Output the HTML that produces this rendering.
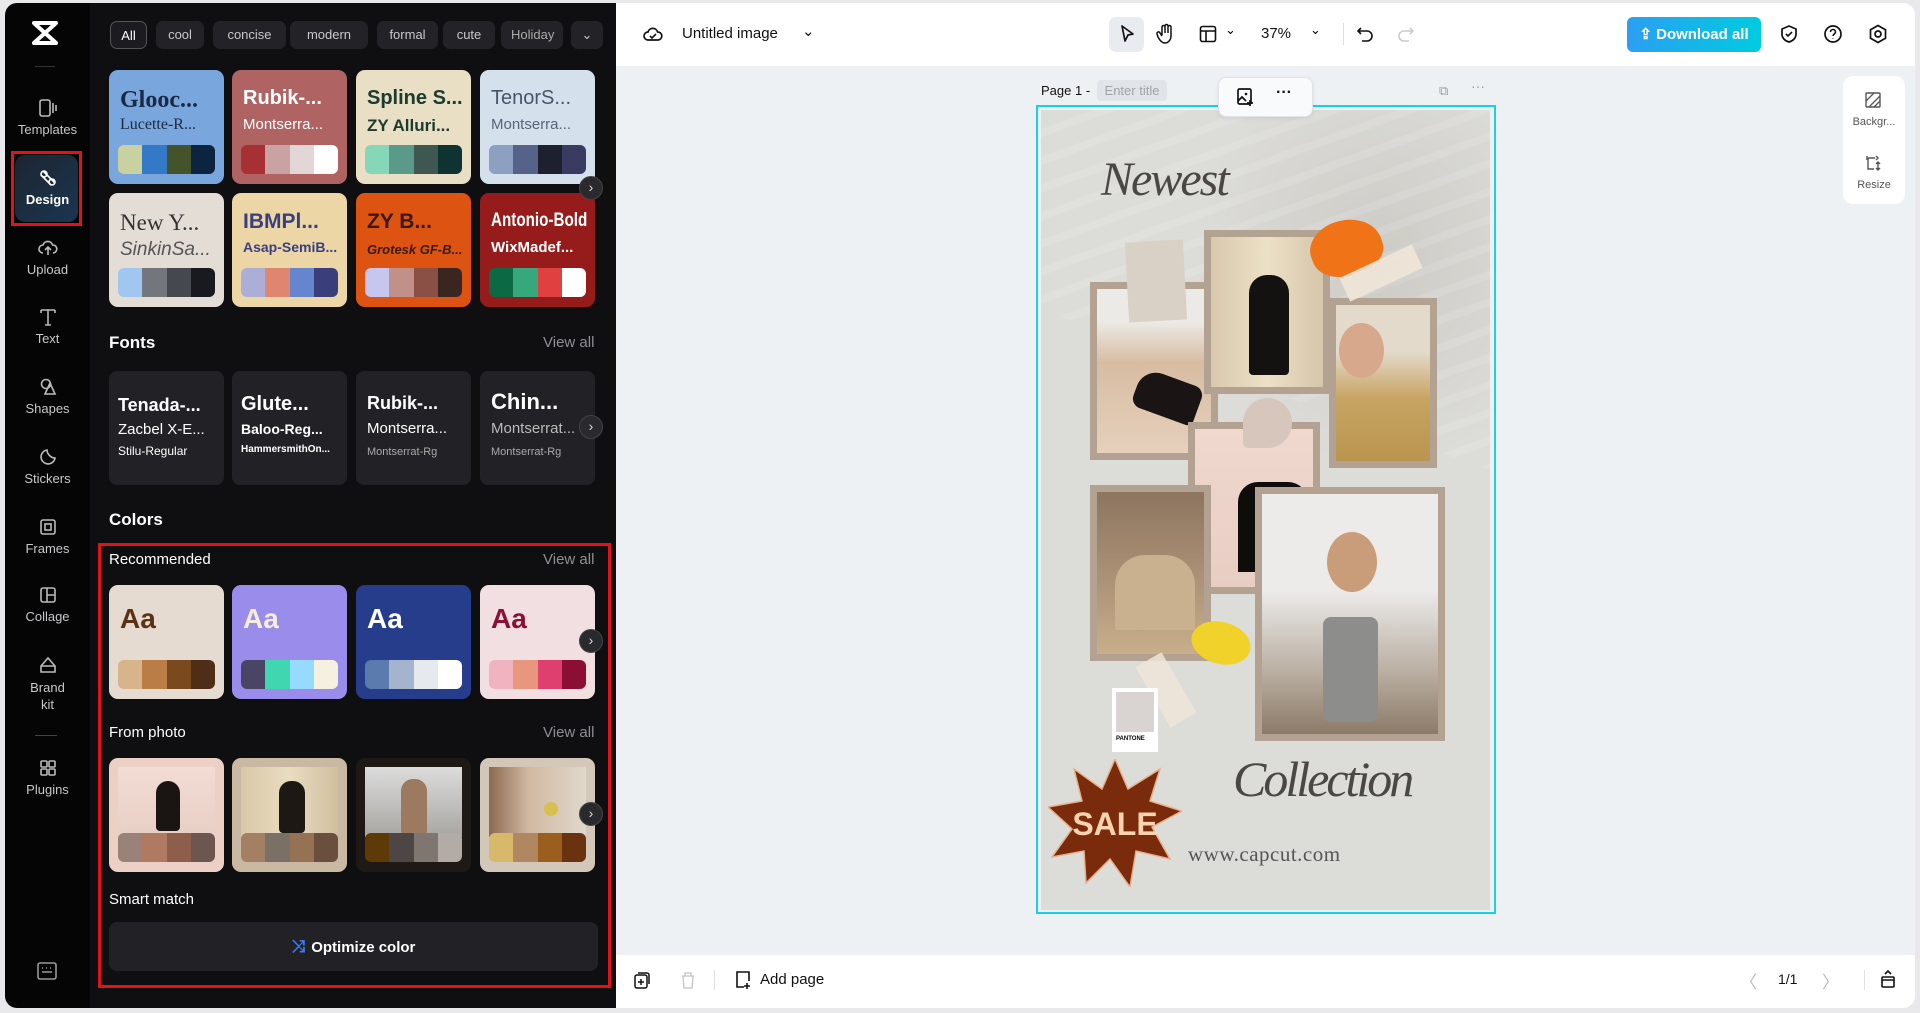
<!DOCTYPE html>
<html><head><meta charset="utf-8">
<style>
*{box-sizing:border-box;margin:0;padding:0}
body{width:1920px;height:1013px;background:#e9e9eb;font-family:"Liberation Sans",sans-serif;position:relative;overflow:hidden}
.a{position:absolute}
#side{left:5px;top:3px;width:85px;height:1005px;background:#050505;border-radius:12px 0 0 12px}
#panel{left:90px;top:3px;width:526px;height:1005px;background:#0f0f11}
.sl{position:absolute;left:5px;width:85px;text-align:center;color:#c8c8cc;font-size:13px}
.sl svg{display:block;margin:0 auto 4px}
.chip{position:absolute;top:21px;height:28px;border-radius:7px;background:#232327;color:#c9c9cc;font-size:13px;line-height:28px;text-align:center}
.card{position:absolute;width:115px;height:114px;border-radius:9px;overflow:hidden}
.card .t1{position:absolute;left:11px;top:17px;font-size:22px;white-space:nowrap}
.card .t2{position:absolute;left:11px;top:46px;font-size:16px;white-space:nowrap}
.sw{position:absolute;left:9px;right:9px;bottom:10px;height:29px;border-radius:6px;overflow:hidden;display:flex}
.sw i{flex:1}
.fc{position:absolute;width:115px;height:114px;border-radius:8px;background:#222226;color:#fff}
.h{position:absolute;color:#fff;font-weight:bold;font-size:17px}
.va{position:absolute;right:24px;color:#8f8f95;font-size:15px}
.arr{position:absolute;width:24px;height:24px;border-radius:50%;background:#2a2a2e;border:1px solid #444;color:#ddd;font-size:14px;line-height:21px;text-align:center}
.fr{position:absolute;background:#b3a292;padding:7px}
.fr div{width:100%;height:100%}
</style></head><body>
<div id="side" class="a"></div>
<div id="panel" class="a"></div>
<!-- logo -->
<svg class="a" style="left:31px;top:20px" width="28" height="26" viewBox="0 0 28 26"><path d="M3 3h22M3 23h22M4 4l20 18M24 4L4 22" stroke="#fff" stroke-width="4" fill="none" stroke-linecap="round"/></svg>
<div class="a" style="left:35px;top:66px;width:20px;height:1px;background:#333"></div>
<div class="sl" style="top:98px"><svg width="20" height="20" viewBox="0 0 20 20"><rect x="2" y="2" width="10" height="16" rx="2" fill="none" stroke="#bbb" stroke-width="1.6"/><path d="M15 5v10M18 7v6" stroke="#bbb" stroke-width="1.6"/></svg>Templates</div>
<div class="a" style="left:11px;top:151px;width:71px;height:75px;border:3px solid #e0121b;"></div>
<div class="a" style="left:15px;top:155px;width:63px;height:67px;border-radius:10px;background:linear-gradient(135deg,#1c2530,#1b3650)"></div>
<div class="sl" style="top:168px;color:#fff;font-weight:bold"><svg width="20" height="20" viewBox="0 0 20 20"><path d="M5 3l12 12M3 7l10 10" stroke="#fff" stroke-width="1.6" fill="none"/><circle cx="6" cy="6" r="3" fill="none" stroke="#fff" stroke-width="1.6"/><circle cx="14" cy="14" r="3" fill="none" stroke="#fff" stroke-width="1.6"/></svg>Design</div>
<div class="sl" style="top:238px"><svg width="20" height="20" viewBox="0 0 20 20"><path d="M5 15a4 4 0 010-8 5 5 0 019.6 0 4 4 0 01.4 8M10 17v-7M7 12l3-3 3 3" stroke="#bbb" stroke-width="1.6" fill="none"/></svg>Upload</div>
<div class="sl" style="top:307px"><svg width="20" height="20" viewBox="0 0 20 20"><path d="M3 3h14M10 3v15M3 3v3M17 3v3M7 18h6" stroke="#bbb" stroke-width="1.6" fill="none"/></svg>Text</div>
<div class="sl" style="top:377px"><svg width="20" height="20" viewBox="0 0 20 20"><circle cx="8" cy="7" r="4.5" fill="none" stroke="#bbb" stroke-width="1.6"/><path d="M12 6l5 11H7z" fill="none" stroke="#bbb" stroke-width="1.6"/></svg>Shapes</div>
<div class="sl" style="top:447px"><svg width="20" height="20" viewBox="0 0 20 20"><path d="M17 11A7 7 0 119 3c0 4 4 8 8 8z" fill="none" stroke="#bbb" stroke-width="1.6"/></svg>Stickers</div>
<div class="sl" style="top:517px"><svg width="20" height="20" viewBox="0 0 20 20"><rect x="3" y="3" width="14" height="14" rx="2" fill="none" stroke="#bbb" stroke-width="1.6"/><rect x="7" y="7" width="6" height="6" fill="none" stroke="#bbb" stroke-width="1.6"/></svg>Frames</div>
<div class="sl" style="top:585px"><svg width="20" height="20" viewBox="0 0 20 20"><rect x="3" y="3" width="14" height="14" rx="2" fill="none" stroke="#bbb" stroke-width="1.6"/><path d="M9 3v14M9 10h8" stroke="#bbb" stroke-width="1.6"/></svg>Collage</div>
<div class="sl" style="top:655px;line-height:17px"><svg width="20" height="20" viewBox="0 0 20 20"><path d="M3 11l7-8 7 8v6H3z M3 11h14" fill="none" stroke="#bbb" stroke-width="1.6"/></svg>Brand<br>kit</div>
<div class="a" style="left:35px;top:735px;width:22px;height:1px;background:#444"></div>
<div class="sl" style="top:758px"><svg width="20" height="20" viewBox="0 0 20 20"><rect x="3" y="3" width="6" height="6" rx="1" fill="none" stroke="#bbb" stroke-width="1.6"/><rect x="11" y="3" width="6" height="6" rx="1" fill="none" stroke="#bbb" stroke-width="1.6"/><rect x="3" y="11" width="6" height="6" rx="1" fill="none" stroke="#bbb" stroke-width="1.6"/><rect x="11" y="11" width="6" height="6" rx="1" fill="none" stroke="#bbb" stroke-width="1.6"/></svg>Plugins</div>
<svg class="a" style="left:37px;top:962px" width="20" height="18" viewBox="0 0 20 18"><rect x="1" y="1" width="18" height="16" rx="2" fill="none" stroke="#999" stroke-width="1.6"/><path d="M5 6h1M9 6h1M13 6h1M5 10h10" stroke="#999" stroke-width="1.6"/></svg>

<!-- chips -->
<div class="chip" style="left:110px;width:37px;border:1px solid #555;color:#fff;background:#1c1c20">All</div>
<div class="chip" style="left:156px;width:48px">cool</div>
<div class="chip" style="left:213px;width:73px">concise</div>
<div class="chip" style="left:290px;width:78px">modern</div>
<div class="chip" style="left:377px;width:61px">formal</div>
<div class="chip" style="left:443px;width:52px">cute</div>
<div class="chip" style="left:501px;width:62px;text-align:left;padding-left:10px;overflow:hidden;color:#aaa">Holiday</div>
<div class="chip" style="left:571px;width:32px">⌄</div>

<!-- theme cards -->
<div class="card" style="left:109px;top:70px;background:#79a6dc"><div class="t1" style="color:#1b2a44;font-family:'Liberation Serif',serif;font-weight:bold;font-size:24px">Glooc...</div><div class="t2" style="color:#1b2a44;font-family:'Liberation Serif',serif">Lucette-R...</div><div class="sw"><i style="background:#c9d1a0"></i><i style="background:#3478c8"></i><i style="background:#45532a"></i><i style="background:#0c2440"></i></div></div>
<div class="card" style="left:232px;top:70px;background:#af6363"><div class="t1" style="color:#fff;font-weight:bold;font-size:20px">Rubik-...</div><div class="t2" style="color:#fff;font-size:15px">Montserra...</div><div class="sw"><i style="background:#a63034"></i><i style="background:#c9a3a3"></i><i style="background:#e2d6d6"></i><i style="background:#fff"></i></div></div>
<div class="card" style="left:356px;top:70px;background:#e8dfc4"><div class="t1" style="color:#1c3a2f;font-weight:bold;font-size:20px">Spline S...</div><div class="t2" style="color:#1c3a2f;font-weight:bold;font-size:17px">ZY Alluri...</div><div class="sw"><i style="background:#86d6b8"></i><i style="background:#5a9a88"></i><i style="background:#3f5751"></i><i style="background:#0f3330"></i></div></div>
<div class="card" style="left:480px;top:70px;background:#d4e0ec"><div class="t1" style="color:#4a5468;font-size:20px">TenorS...</div><div class="t2" style="color:#5a6478;font-size:15px">Montserra...</div><div class="sw"><i style="background:#8ea0c2"></i><i style="background:#56628a"></i><i style="background:#1e2030"></i><i style="background:#393b60"></i></div></div>
<div class="card" style="left:109px;top:193px;background:#e3ddd6"><div class="t1" style="color:#333;font-family:'Liberation Serif',serif;font-size:23px">New Y...</div><div class="t2" style="color:#555;font-style:italic;font-size:19px">SinkinSa...</div><div class="sw"><i style="background:#a1c6ef"></i><i style="background:#73777d"></i><i style="background:#45484f"></i><i style="background:#181a1f"></i></div></div>
<div class="card" style="left:232px;top:193px;background:#ecd6a6"><div class="t1" style="color:#3a3f80;font-weight:bold;font-size:21px">IBMPl...</div><div class="t2" style="color:#3a3f80;font-weight:bold;font-size:14px">Asap-SemiB...</div><div class="sw"><i style="background:#abafd8"></i><i style="background:#e08570"></i><i style="background:#6585cf"></i><i style="background:#3a3f7b"></i></div></div>
<div class="card" style="left:356px;top:193px;background:#dc5312"><div class="t1" style="color:#3a1a10;font-weight:bold;font-size:21px">ZY B...</div><div class="t2" style="color:#3a1a10;font-weight:bold;font-style:italic;font-size:13px;top:49px">Grotesk GF-B...</div><div class="sw"><i style="background:#c6c6ee"></i><i style="background:#c19088"></i><i style="background:#8a5045"></i><i style="background:#3a2620"></i></div></div>
<div class="card" style="left:480px;top:193px;background:#961c1c"><div class="t1" style="color:#fff;font-weight:bold;font-size:19px;transform:scaleX(.8);transform-origin:left">Antonio-Bold</div><div class="t2" style="color:#fff;font-weight:bold;font-size:15px">WixMadef...</div><div class="sw"><i style="background:#0b6a44"></i><i style="background:#36a87c"></i><i style="background:#e04040"></i><i style="background:#fff"></i></div></div>
<div class="arr" style="left:579px;top:176px">›</div>

<div class="h" style="left:109px;top:333px">Fonts</div><div class="va" style="top:334px;right:1324px;left:auto"></div>
<div class="a" style="left:543px;top:334px;color:#8f8f95;font-size:15px">View all</div>
<div class="fc" style="left:109px;top:371px"><div class="a" style="left:9px;top:24px;font-weight:bold;font-size:18px">Tenada-...</div><div class="a" style="left:9px;top:50px;font-size:15px">Zacbel X-E...</div><div class="a" style="left:9px;top:73px;font-size:12px">Stilu-Regular</div></div>
<div class="fc" style="left:232px;top:371px"><div class="a" style="left:9px;top:22px;font-weight:bold;font-size:20px">Glute...</div><div class="a" style="left:9px;top:50px;font-weight:bold;font-size:14px">Baloo-Reg...</div><div class="a" style="left:9px;top:73px;font-weight:bold;font-size:10px">HammersmithOn...</div></div>
<div class="fc" style="left:356px;top:371px"><div class="a" style="left:11px;top:22px;font-weight:bold;font-size:18px">Rubik-...</div><div class="a" style="left:11px;top:49px;font-size:15px">Montserra...</div><div class="a" style="left:11px;top:75px;font-size:11px;color:#aaa">Montserrat-Rg</div></div>
<div class="fc" style="left:480px;top:371px"><div class="a" style="left:11px;top:18px;font-weight:bold;font-size:22px">Chin...</div><div class="a" style="left:11px;top:49px;font-size:15px;color:#bbb">Montserrat...</div><div class="a" style="left:11px;top:75px;font-size:11px;color:#aaa">Montserrat-Rg</div></div>
<div class="arr" style="left:579px;top:415px">›</div>

<div class="h" style="left:109px;top:510px">Colors</div>
<div class="a" style="left:98px;top:543px;width:513px;height:445px;border:3px solid #e0121b"></div>
<div class="a" style="left:109px;top:551px;color:#fff;font-size:15px">Recommended</div>
<div class="a" style="left:543px;top:551px;color:#8f8f95;font-size:15px">View all</div>
<div class="card" style="left:109px;top:585px;background:#e6dbd0"><div class="t1" style="color:#5a3315;font-weight:bold;font-size:28px;top:18px">Aa</div><div class="sw"><i style="background:#d7b48a"></i><i style="background:#b97d45"></i><i style="background:#7a4a1e"></i><i style="background:#4f2e18"></i></div></div>
<div class="card" style="left:232px;top:585px;background:#9a8ceb"><div class="t1" style="color:#f5eede;font-weight:bold;font-size:28px;top:18px">Aa</div><div class="sw"><i style="background:#4b4565"></i><i style="background:#3fd6b0"></i><i style="background:#96daff"></i><i style="background:#f5f0e0"></i></div></div>
<div class="card" style="left:356px;top:585px;background:#253d8a"><div class="t1" style="color:#fff;font-weight:bold;font-size:28px;top:18px">Aa</div><div class="sw"><i style="background:#5b7aad"></i><i style="background:#a4b4cc"></i><i style="background:#e6eaee"></i><i style="background:#fff"></i></div></div>
<div class="card" style="left:480px;top:585px;background:#f1dfe1"><div class="t1" style="color:#8a1038;font-weight:bold;font-size:28px;top:18px">Aa</div><div class="sw"><i style="background:#f2b3c0"></i><i style="background:#e8967e"></i><i style="background:#de3f6e"></i><i style="background:#8b0f35"></i></div></div>
<div class="arr" style="left:579px;top:629px">›</div>

<div class="a" style="left:109px;top:724px;color:#fff;font-size:15px">From photo</div>
<div class="a" style="left:543px;top:724px;color:#8f8f95;font-size:15px">View all</div>
<div class="card" style="left:109px;top:758px;background:#ecd0c5"><div class="a" style="left:9px;top:9px;width:97px;height:70px;background:linear-gradient(#f2dcd4,#e8cfc5)"><div class="a" style="left:38px;top:14px;width:24px;height:50px;background:#1a1412;border-radius:12px 12px 4px 4px"></div></div><div class="sw"><i style="background:#9b8278"></i><i style="background:#b07a62"></i><i style="background:#8e5e4c"></i><i style="background:#6e5650"></i></div></div>
<div class="card" style="left:232px;top:758px;background:#c9b9a3"><div class="a" style="left:9px;top:9px;width:97px;height:70px;background:linear-gradient(90deg,#d8c8a8,#eadcc0,#cfbf9f)"><div class="a" style="left:38px;top:14px;width:26px;height:52px;background:#1e1815;border-radius:12px 12px 4px 4px"></div></div><div class="sw"><i style="background:#a37f63"></i><i style="background:#7a7066"></i><i style="background:#957254"></i><i style="background:#6b4f3e"></i></div></div>
<div class="card" style="left:356px;top:758px;background:#1e1915"><div class="a" style="left:9px;top:9px;width:97px;height:70px;background:linear-gradient(#dcdcdc,#a8a6a2)"><div class="a" style="left:36px;top:12px;width:26px;height:56px;background:#9b7a60;border-radius:12px 12px 4px 4px"></div></div><div class="sw"><i style="background:#5e3a08"></i><i style="background:#4e4644"></i><i style="background:#7f7670"></i><i style="background:#b3aba5"></i></div></div>
<div class="card" style="left:480px;top:758px;background:#d2c7b8"><div class="a" style="left:9px;top:9px;width:97px;height:70px;background:linear-gradient(90deg,#8a6a50,#d0b8a0 40%,#e0d8cc)"><div class="a" style="left:55px;top:35px;width:14px;height:14px;background:#d8c050;border-radius:50%"></div></div><div class="sw"><i style="background:#d8b86a"></i><i style="background:#b08760"></i><i style="background:#9a5e1e"></i><i style="background:#6b3210"></i></div></div>
<div class="arr" style="left:579px;top:802px">›</div>

<div class="a" style="left:109px;top:891px;color:#fff;font-size:15px">Smart match</div>
<div class="a" style="left:109px;top:922px;width:489px;height:49px;border-radius:8px;background:#222226;color:#fff;font-weight:bold;font-size:15px;text-align:center;line-height:49px"><span style="color:#3b7bff;font-size:17px;margin-right:6px">⤨</span>Optimize color</div>

<div class="a" style="left:616px;top:478px;width:7px;height:57px;background:#2a2a2e;border-radius:0 6px 6px 0"></div>

<!-- main area -->
<div class="a" style="left:616px;top:3px;width:1299px;height:1005px;background:#eef1f4;border-radius:0 12px 12px 0;overflow:hidden">
 <div class="a" style="left:0;top:0;width:1299px;height:63px;background:#fff"></div>
 <div class="a" style="left:0;top:952px;width:1299px;height:53px;background:#fff"></div>
</div>
<!-- top bar -->
<svg class="a" style="left:643px;top:25px" width="20" height="18" viewBox="0 0 20 18"><path d="M5 15a4 4 0 010-8 5 5 0 019.6 0 4 4 0 01.4 8z" fill="none" stroke="#111" stroke-width="1.7"/><path d="M7 11l2 2 4-4" fill="none" stroke="#111" stroke-width="1.6"/></svg>
<div class="a" style="left:682px;top:25px;font-size:15px;color:#111">Untitled image</div>
<div class="a" style="left:802px;top:22px;font-size:15px;color:#111">⌄</div>
<div class="a" style="left:1109px;top:17px;width:35px;height:35px;border-radius:7px;background:#e8ebef"></div>
<svg class="a" style="left:1117px;top:24px" width="20" height="20" viewBox="0 0 20 20"><path d="M5 2l11 8-5 1-3 6z" fill="none" stroke="#111" stroke-width="1.7" stroke-linejoin="round"/></svg>
<svg class="a" style="left:1156px;top:23px" width="20" height="22" viewBox="0 0 20 22"><path d="M6 12V4a1.5 1.5 0 013 0v6M9 9V3a1.5 1.5 0 013 0v7M12 9V4a1.5 1.5 0 013 0v9c0 4-3 7-6 7s-5-2-7-6l-1-3a1.5 1.5 0 013-1l2 3" fill="none" stroke="#111" stroke-width="1.5"/></svg>
<svg class="a" style="left:1199px;top:25px" width="18" height="18" viewBox="0 0 18 18"><rect x="1.5" y="1.5" width="15" height="15" rx="2" fill="none" stroke="#111" stroke-width="1.6"/><path d="M1.5 6h15M7 6v10.5" stroke="#111" stroke-width="1.6"/></svg>
<div class="a" style="left:1225px;top:22px;font-size:13px">⌄</div>
<div class="a" style="left:1261px;top:25px;font-size:15px;color:#111">37%</div>
<div class="a" style="left:1310px;top:22px;font-size:13px">⌄</div>
<div class="a" style="left:1343px;top:23px;width:1px;height:22px;background:#ddd"></div>
<svg class="a" style="left:1356px;top:25px" width="18" height="18" viewBox="0 0 18 18"><path d="M5 3L2 6l3 3M2 6h9a5 5 0 010 10H6" fill="none" stroke="#111" stroke-width="1.6"/></svg>
<svg class="a" style="left:1397px;top:25px" width="18" height="18" viewBox="0 0 18 18"><path d="M13 3l3 3-3 3M16 6H7a5 5 0 000 10h5" fill="none" stroke="#ccc" stroke-width="1.6"/></svg>
<div class="a" style="left:1627px;top:17px;width:134px;height:35px;border-radius:6px;background:linear-gradient(90deg,#2b9ff2,#00cbe0);color:#fff;font-weight:bold;font-size:15px;line-height:35px;text-align:center">⇪ Download all</div>
<svg class="a" style="left:1779px;top:24px" width="20" height="20" viewBox="0 0 20 20"><path d="M10 2l7 3v5c0 4-3 7-7 8-4-1-7-4-7-8V5z" fill="none" stroke="#111" stroke-width="1.7"/><path d="M7 10l2 2 4-4" fill="none" stroke="#111" stroke-width="1.6"/></svg>
<svg class="a" style="left:1823px;top:24px" width="20" height="20" viewBox="0 0 20 20"><circle cx="10" cy="10" r="8" fill="none" stroke="#111" stroke-width="1.7"/><path d="M7.5 8a2.5 2.5 0 115 0c0 2-2.5 2-2.5 4M10 14.5v.5" fill="none" stroke="#111" stroke-width="1.6"/></svg>
<svg class="a" style="left:1868px;top:24px" width="20" height="20" viewBox="0 0 20 20"><path d="M10 1.5l7.5 4.3v8.4L10 18.5l-7.5-4.3V5.8z" fill="none" stroke="#111" stroke-width="1.7"/><circle cx="10" cy="10" r="3" fill="none" stroke="#111" stroke-width="1.7"/></svg>

<!-- page header -->
<div class="a" style="left:1041px;top:83px;font-size:13px;color:#111">Page 1 -</div>
<div class="a" style="left:1097px;top:80px;width:70px;height:21px;border-radius:4px;background:#e1e5ea;color:#a0a4aa;font-size:13px;line-height:21px;text-align:center">Enter title</div>
<div class="a" style="left:1439px;top:83px;font-size:13px;color:#999">⧉</div>
<div class="a" style="left:1471px;top:78px;font-size:14px;color:#999">···</div>

<!-- artboard -->
<div class="a" style="left:1036px;top:105px;width:460px;height:809px;border:2px solid #1ad0e6;background:#eef1f4"></div>
<div class="a" style="left:1041px;top:110px;width:449px;height:800px;background:#dcdcd8;overflow:hidden">
 <div class="a" style="left:150px;top:-60px;width:380px;height:420px;border-radius:50%;background:radial-gradient(ellipse,#cdcbc6 0%,rgba(205,203,198,0) 70%)"></div>
 <div class="a" style="left:0;top:0;width:449px;height:800px;background:repeating-linear-gradient(160deg,rgba(255,255,255,0) 0 18px,rgba(255,255,255,.18) 18px 26px);opacity:.6;clip-path:polygon(0 0,100% 0,100% 45%,0 25%)"></div>
 <div class="a" style="left:60px;top:42px;font-family:'Liberation Serif',serif;font-style:italic;font-size:48px;color:#4a4744;letter-spacing:-2px">Newest</div>
 <div class="fr" style="left:49px;top:172px;width:128px;height:178px"><div style="background:linear-gradient(#eceae6 0 20%,#d7bca2 45%,#e6d0bc)"><div class="a" style="left:45px;top:95px;width:65px;height:40px;background:#1a1514;border-radius:20px 10px 6px 10px;transform:rotate(20deg)"></div></div></div>
 <div class="fr" style="left:163px;top:120px;width:126px;height:164px"><div style="background:linear-gradient(90deg,#d8c9ad,#ece0c6,#d6c6aa)"><div class="a" style="left:45px;top:45px;width:40px;height:100px;background:#141210;border-radius:18px 18px 4px 4px"></div></div></div>
 <div class="fr" style="left:288px;top:188px;width:108px;height:170px"><div style="background:linear-gradient(#e3dacb 0 30%,#c8a463 60%,#b9954f)"><div class="a" style="left:10px;top:25px;width:45px;height:55px;background:#d8a88c;border-radius:50%"></div></div></div>
 <div class="fr" style="left:147px;top:312px;width:132px;height:172px"><div style="background:linear-gradient(#f0d8cf,#e8cdc3)"><div class="a" style="left:50px;top:60px;width:70px;height:90px;background:#0f0c0c;border-radius:20px 20px 0 0"></div></div></div>
 <div class="fr" style="left:49px;top:375px;width:121px;height:176px"><div style="background:linear-gradient(#8d7560,#a48a70 40%,#c8ae8a)"><div class="a" style="left:25px;top:70px;width:80px;height:75px;background:#c9b08e;border-radius:30px 30px 0 0"></div></div></div>
 <div class="fr" style="left:214px;top:377px;width:190px;height:254px"><div style="background:linear-gradient(#ecebea 0 40%,#b8ada0 75%,#8c7a68)"><div class="a" style="left:68px;top:130px;width:55px;height:105px;background:#8d8d8b;border-radius:8px"></div><div class="a" style="left:72px;top:45px;width:50px;height:60px;background:#c99c7a;border-radius:50%"></div></div></div>
 <div class="a" style="left:86px;top:131px;width:58px;height:80px;background:#d9d0c6;transform:rotate(-3deg)"></div>
 <div class="a" style="left:202px;top:288px;width:49px;height:50px;border-radius:50% 50% 50% 10%;background:#d6c6bc"></div>
 <div class="a" style="left:269px;top:110px;width:72px;height:55px;background:#f07318;border-radius:50% 60% 40% 50%;transform:rotate(-20deg)"></div>
 <div class="a" style="left:300px;top:150px;width:80px;height:26px;background:#efe5d8;opacity:.9;transform:rotate(-25deg)"></div>
 <div class="a" style="left:150px;top:512px;width:60px;height:42px;background:#f0d22a;border-radius:50%;transform:rotate(15deg)"></div>
 <div class="a" style="left:110px;top:545px;width:30px;height:70px;background:#efe5d8;opacity:.85;transform:rotate(-30deg)"></div>
 <div class="a" style="left:71px;top:578px;width:46px;height:64px;background:#fff;padding:4px"><div style="height:40px;background:#d9d3d2"></div><div style="font-size:6px;font-weight:bold;margin-top:4px">PANTONE</div></div>
 <svg class="a" style="left:7px;top:649px" width="134" height="128" viewBox="0 0 134 128"><polygon points="67,0 80,30 112,10 102,42 134,52 104,68 122,100 88,92 82,128 62,100 38,124 36,92 4,98 24,70 0,48 34,42 26,10 54,30" fill="#7a2b0c" stroke="#e8b08a" stroke-width="1.5"/><text x="67" y="76" text-anchor="middle" font-family="Liberation Sans" font-weight="bold" font-size="32" fill="#f8d3b0">SALE</text></svg>
 <div class="a" style="left:192px;top:640px;font-family:'Liberation Serif',serif;font-style:italic;font-size:50px;color:#4a4744;letter-spacing:-3px">Collection</div>
 <div class="a" style="left:147px;top:732px;font-family:'Liberation Serif',serif;font-size:21px;color:#555;letter-spacing:.5px">www.capcut.com</div>
</div>
<!-- floating toolbar -->
<div class="a" style="left:1218px;top:77px;width:95px;height:40px;background:#f8fafc;border-radius:8px;border:1px solid #e0e3e7;box-shadow:0 1px 4px rgba(0,0,0,.08)"></div>
<svg class="a" style="left:1236px;top:87px" width="20" height="20" viewBox="0 0 20 20"><rect x="2" y="2" width="13" height="15" rx="1.5" fill="none" stroke="#111" stroke-width="1.7"/><circle cx="10" cy="7" r="1.3" fill="#111"/><path d="M2 14l4-4 4 4M14 13v6M11 16h6" fill="none" stroke="#111" stroke-width="1.7"/></svg>
<div class="a" style="left:1276px;top:84px;font-size:16px;font-weight:bold;color:#111">···</div>
<!-- right floating panel -->
<div class="a" style="left:1843px;top:76px;width:62px;height:128px;background:#fff;border-radius:10px"></div>
<svg class="a" style="left:1865px;top:92px" width="16" height="16" viewBox="0 0 16 16"><rect x="1" y="1" width="14" height="14" rx="1" fill="none" stroke="#555" stroke-width="1.4"/><path d="M1 9L9 1M4 15L15 4M9 15l6-6" stroke="#555" stroke-width="1.3"/></svg>
<div class="a" style="left:1846px;top:116px;width:56px;text-align:center;font-size:11px;color:#555">Backgr...</div>
<svg class="a" style="left:1865px;top:155px" width="16" height="16" viewBox="0 0 16 16"><path d="M3 3h7M3 3v11h6M13 7v8M11 9l2-2 2 2M11 13l2 2 2-2M2 1v4M11 1l2 2-2 2" fill="none" stroke="#555" stroke-width="1.4"/></svg>
<div class="a" style="left:1846px;top:179px;width:56px;text-align:center;font-size:11px;color:#555">Resize</div>
<!-- bottom bar -->
<svg class="a" style="left:633px;top:971px" width="18" height="18" viewBox="0 0 18 18"><rect x="2" y="4" width="12" height="13" rx="2" fill="none" stroke="#111" stroke-width="1.5"/><path d="M5 2h9a2 2 0 012 2v9M8 8v6M5 11h6" fill="none" stroke="#111" stroke-width="1.5"/></svg>
<svg class="a" style="left:680px;top:971px" width="16" height="18" viewBox="0 0 16 18"><path d="M2 5h12M5 5V2h6v3M3 5l1 12h8l1-12" fill="none" stroke="#c8ccd2" stroke-width="1.5"/></svg>
<div class="a" style="left:714px;top:970px;width:1px;height:20px;background:#e0e0e0"></div>
<svg class="a" style="left:734px;top:970px" width="18" height="20" viewBox="0 0 18 20"><path d="M10 17H3V2h12v9M13 13v6M10 16h6" fill="none" stroke="#111" stroke-width="1.6"/></svg>
<div class="a" style="left:760px;top:971px;font-size:15px;color:#111">Add page</div>
<div class="a" style="left:1740px;top:968px;font-size:17px;color:#bbb">〈</div>
<div class="a" style="left:1778px;top:971px;font-size:14px;color:#111">1/1</div>
<div class="a" style="left:1822px;top:968px;font-size:17px;color:#bbb">〉</div>
<div class="a" style="left:1864px;top:970px;width:1px;height:20px;background:#e0e0e0"></div>
<svg class="a" style="left:1879px;top:969px" width="18" height="20" viewBox="0 0 18 20"><rect x="3" y="8" width="12" height="10" rx="1" fill="none" stroke="#111" stroke-width="1.6"/><path d="M6 5l3-3 3 3M3 11h12" fill="none" stroke="#111" stroke-width="1.6"/></svg>
</body></html>
